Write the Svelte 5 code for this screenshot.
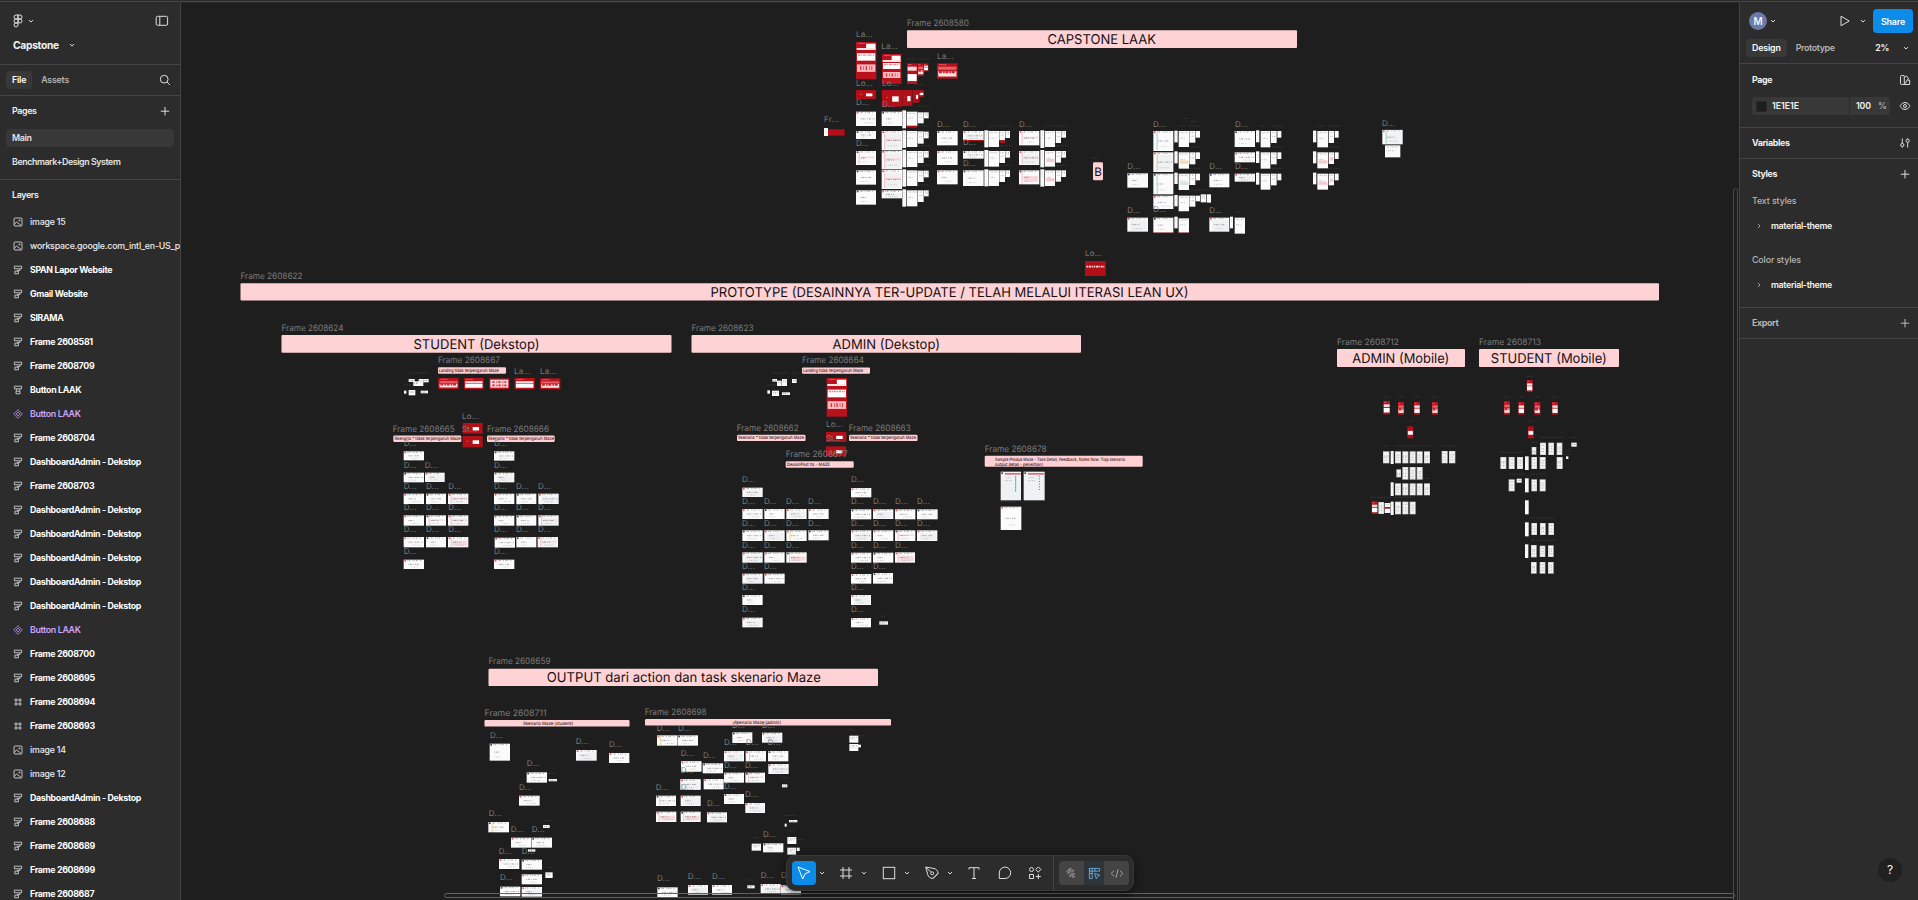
<script>
  const layers = [
    ['image', 'image 15'], ['image', 'workspace.google.com_intl_en-US_products'],
    ['auto', 'SPAN Lapor Website'], ['auto', 'Gmail Website'], ['auto', 'SIRAMA'],
    ['auto', 'Frame 2608581'], ['auto', 'Frame 2608709'], ['center', 'Button LAAK'],
    ['component', 'Button LAAK'], ['auto', 'Frame 2608704'], ['auto', 'DashboardAdmin - Dekstop'],
    ['auto', 'Frame 2608703'], ['auto', 'DashboardAdmin - Dekstop'], ['auto', 'DashboardAdmin - Dekstop'],
    ['auto', 'DashboardAdmin - Dekstop'], ['auto', 'DashboardAdmin - Dekstop'], ['auto', 'DashboardAdmin - Dekstop'],
    ['component', 'Button LAAK'], ['auto', 'Frame 2608700'], ['auto', 'Frame 2608695'],
    ['frame', 'Frame 2608694'], ['frame', 'Frame 2608693'], ['image', 'image 14'], ['image', 'image 12'],
    ['auto', 'DashboardAdmin - Dekstop'], ['auto', 'Frame 2608688'], ['auto', 'Frame 2608689'],
    ['auto', 'Frame 2608699'], ['auto', 'Frame 2608687']
  ];

  // Section banners: x, y, width, height, text, text x, text width
  const banners = [
    [907, 30.3, 390, 17.6, 'CAPSTONE LAAK', 1047.5, 108.5],
    [240.5, 283.3, 1418.5, 17.2, 'PROTOTYPE (DESAINNYA TER-UPDATE / TELAH MELALUI ITERASI LEAN UX)', 710.5, 478],
    [281.5, 335, 390, 17.8, 'STUDENT (Dekstop)', 413.5, 126],
    [691.5, 335, 389.5, 17.8, 'ADMIN (Dekstop)', 832.5, 107.5],
    [1337, 349, 128, 18, 'ADMIN (Mobile)', 1352.3, 97],
    [1479, 349, 140, 18, 'STUDENT (Mobile)', 1490.8, 116],
    [488.5, 668.8, 389.5, 17.2, 'OUTPUT dari action dan task skenario Maze', 546.8, 274]
  ];

  // Frame names: x, baseline, text
  const names = [
    [907, 25.8, 'Frame 2608580'], [240.5, 279, 'Frame 2608622'], [281.5, 331, 'Frame 2608624'],
    [691.5, 331, 'Frame 2608623'], [1337, 344.8, 'Frame 2608712'], [1479, 344.8, 'Frame 2608713'],
    [488.5, 664, 'Frame 2608659'], [484.5, 716, 'Frame 2608711'], [644.7, 715, 'Frame 2608698'],
    [438, 363, 'Frame 2608667'], [392.7, 432, 'Frame 2608665'], [487, 432, 'Frame 2608666'],
    [802, 363, 'Frame 2608664'], [736.7, 431, 'Frame 2608662'], [848.7, 431, 'Frame 2608663'],
    [785.7, 457, 'Frame 2608677'], [984.7, 452, 'Frame 2608678']
  ];

  // Small note strips: x, y, width, height, text, text x, text width
  const strips = [
    [438, 367.2, 68, 6.6, 'Landing tidak terpengaruh Maze', 438.8, 60],
    [393.3, 435.5, 68, 6.4, 'Skenario * tidak terpengaruh Maze', 394.5, 66],
    [487, 435.5, 67.7, 6.4, 'Skenario * tidak terpengaruh Maze', 488, 66],
    [802, 367.4, 68, 6.4, 'Landing tidak terpengaruh Maze', 803, 60],
    [737, 434.7, 68.5, 6.4, 'Skenario * tidak terpengaruh Maze', 738, 66],
    [849, 434.7, 68.5, 6.4, 'Skenario * tidak terpengaruh Maze', 850, 66],
    [785.7, 461.3, 68, 6.4, 'DesainPost Its - MAZE', 787, 43],
    [484.5, 720, 145, 6.6, 'Skenario Maze (student)', 523, 50],
    [645, 719, 246, 6.6, 'Skenario Maze (admin)', 734, 47]
  ];

  // Clusters use a 1/3 px grid: kind x y w h. Kinds: w screen, p screen with pink rows,
  // m mobile, s side strip, r red, h red header page, g pale shot, d dotted label
  const clusters = [
    { x: 810, y: 0, items: `h 138 126 61 112;h 216 162 58 90;h 291 190 31 62;h 323 190 18 38;h 341 190 14 24;h 381 190 62 46;
      r 138 270 60 27;r 216 270 61 50;r 277 270 30 48;r 308 270 20 38;r 328 270 13 22;
      w 138 335 60 43;w 215 335 61 43;s 277 331 11 54;w 290 335 32 43;r 290 377 32 6;w 323 337 18 33;w 342 337 14 18;
      w 138 393 60 24;p 215 393 61 57;s 277 391 11 53;w 290 393 32 48;w 323 394 18 37;w 342 395 14 20;
      p 138 453 60 42;p 215 452 61 56;s 277 449 11 53;w 290 453 32 48;w 323 453 18 36;w 342 453 14 20;
      w 138 511 60 43;p 215 510 61 57;s 277 508 11 52;w 290 511 32 47;w 323 512 18 34;w 342 512 14 20;
      w 138 571 60 43;w 215 571 61 24;s 277 568 11 52;w 290 571 32 48;w 323 571 18 35;w 342 571 14 18;
      w 381 393 62 43;w 459 393 62 29;r 459 420 62 3;s 523 391 12 51;w 536 393 31 48;w 568 393 17 28;r 570 421 16 8;w 586 393 14 21;
      w 381 453 62 42;w 459 453 62 23;s 523 450 12 50;w 536 453 31 47;w 568 453 17 36;w 586 453 14 20;
      w 381 511 62 42;w 459 511 62 47;s 523 508 12 51;w 536 511 31 47;w 568 511 17 35;w 586 511 14 20;
      p 627 393 61 43;s 691 391 12 53;w 705 393 30 48;w 737 393 16 36;w 754 393 14 20;
      p 627 453 61 42;s 691 450 12 52;p 705 453 30 47;w 737 453 16 35;w 754 453 14 20;
      q 627 511 61 42;s 691 508 12 52;q 705 511 30 47;w 737 511 16 34;w 754 511 14 20;
      s 42 384 12 24;r 54 388 50 19;B 849 487 30 54;r 825 783 62 45;
      d 291 177 22;d 325 177 36;d 316 255 30;d 323 318 38;d 323 378 38;d 323 437 38;d 323 496 38;d 323 555 34;
      d 538 378 22;d 567 378 40;d 567 437 38;d 567 496 36;d 705 378 24;d 735 378 40;d 735 437 38;d 735 496 36;d 847 474 18`,
      tags: 'La 138 112;La 214 148;La 381 178;Lo 138 257;Lo 216 257;D 138 316;D 216 320;Fr 42 366;D 381 380;D 459 380;D 627 380;D 138 438;D 459 436;D 459 497;Lo 825 769' },
    { x: 1090, y: 90, items: `w 112 250 62 43;w 112 383 62 42;
      t 190 123 60 60;s 253 122 10 35;w 266 123 31 48;w 298 123 18 35;w 317 123 13 20;
      y 190 187 60 59;s 253 184 10 36;y 266 187 31 49;w 298 187 18 36;w 317 187 13 20;
      t 190 251 60 62;s 253 248 10 34;t 266 251 31 49;w 298 251 18 34;w 317 251 13 20;
      w 190 317 60 40;s 253 315 10 34;w 266 317 31 47;w 298 317 18 33;w 317 317 13 17;w 332 313 17 24;w 351 313 12 25;
      w 190 383 60 45;s 253 380 10 35;w 266 385 31 43;r 190 428 60 1.5;r 266 428 31 1.5;r 266 364 31 1.5;
      w 434 123 61 48;s 498 121 10 36;w 512 123 29 49;w 543 123 17 36;w 562 123 12 20;
      w 434 187 61 30;s 498 184 10 35;w 512 187 29 49;w 543 187 17 36;w 562 187 12 20;
      w 434 251 61 24;s 498 248 10 36;w 512 251 29 48;w 543 251 17 35;w 562 251 12 20;
      w 358 251 60 41;w 358 383 60 42;s 420 380 9 35;w 434 383 31 48;
      s 669 122 10 35;w 682 123 32 49;w 716 123 16 36;w 734 123 12 20;
      s 669 184 10 36;p 682 187 32 48;p 716 187 16 35;w 734 187 12 20;
      s 669 248 10 35;p 682 251 32 48;p 716 251 16 35;w 734 251 12 20;
      t 877 120 61 43;w 885 166 46 36;r 877 118 61 2;
      d 268 108 18;d 297 108 40;d 303 94 20;d 278 85 20;d 297 171 40;d 297 235 36;d 297 300 72;d 510 108 20;d 541 108 40;d 541 171 38;d 541 235 38;d 680 108 22;d 714 108 36;d 714 171 36;d 714 235 36;d 436 365 14`,
      tags: 'D 189 110;D 112 236;D 435 110;D 358 236;D 435 236;D 112 368;D 190 367;D 358 368;D 876 107' },
    { x: 380, y: 340, items: `w 86 117 18 9;w 100 124 18 14;w 116 117 14 21;w 130 117 16 10;w 72 152 7 9;w 86 150 20 16;w 122 152 22 8;
      h 175 114 61 33;h 252 114 59 34;g 328 115 60 32;h 404 114 60 34;h 480 115 61 33;
      r 248 249 60 32;r 248 288 60 34;
      w 71 334 61 27;w 71 398 61 29;w 135 398 59 28;w 71 461 61 31;w 138 461 60 31;p 204 461 61 31;
      w 71 526 61 31;p 138 526 60 31;p 204 526 61 31;w 71 591 61 31;w 138 591 60 31;q 204 591 61 31;w 71 659 61 28;
      w 342 334 61 28;w 342 398 61 29;w 342 461 61 31;w 409 461 60 31;w 475 461 61 31;
      w 342 527 61 30;w 409 526 60 31;p 475 526 61 31;w 344 593 61 30;w 409 591 60 31;p 473 591 61 31;w 342 659 61 28;
      d 88 99 60;d 72 135 30`,
      tags: 'La 402 101;La 480 101;Lo 246 236;St 246 277;D 71 318;D 71 383;D 134 383;D 71 446;D 138 446;D 205 446;D 71 511;D 138 511;D 205 511;D 71 577;D 138 577;D 205 577;D 71 641;D 342 318;D 342 383;D 342 446;D 408 446;D 474 446;D 342 511;D 408 511;D 474 511;D 342 577;D 408 577;D 474 577;D 342 641' },
    { x: 720, y: 340, items: `w 157 117 14 8;w 171 122 14 16;w 186 117 15 21;w 216 117 14 12;w 142 151 8 10;w 156 152 21 16;w 186 157 24 8;
      h 320 114 61 116;r 318 276 61 30;r 318 319 60 30;
      w 67 443 61 28;w 67 507 61 30;w 133 507 61 30;w 199 507 61 30;w 265 507 61 30;
      w 67 571 61 32;w 133 571 61 32;y 199 571 61 32;w 265 571 61 30;w 67 637 61 31;w 133 637 61 31;q 199 637 61 31;
      w 67 701 61 30;w 133 701 61 30;w 67 765 61 30;w 67 833 61 29;
      w 393 444 61 28;w 393 508 61 30;w 459 508 61 29;w 525 508 61 30;w 591 508 62 30;
      w 393 571 61 32;w 459 571 61 32;p 525 571 61 32;w 591 571 61 32;w 393 638 61 30;w 459 638 61 30;q 525 637 60 31;
      w 393 702 61 29;w 459 699 60 32;w 393 765 60 30;w 393 834 60 28;w 478 844 26 10;
      d 156 99 48;d 216 99 18;d 140 135 28;d 482 829 14`,
      tags: 'Lo 318 260;Si 318 302;D 66 427;D 66 491;D 132 491;D 198 491;D 264 491;D 66 558;D 132 558;D 198 558;D 264 558;D 66 623;D 132 623;D 198 623;D 66 686;D 132 686;D 66 749;D 66 817;D 393 427;D 393 491;D 459 491;D 525 491;D 591 491;D 393 558;D 459 558;D 525 558;D 591 558;D 393 623;D 459 623;D 525 623;D 393 686;D 459 686;D 393 749;D 393 817' },
    { x: 960, y: 320, items: `c 122 455 61 86;c 191 455 63 86;w 122 560 62 70;d 120 545 46`, tags: '' },
    { x: 1320, y: 320, items: `k 190 243 20 40;k 234 246 18 38;k 282 246 18 38;k 336 246 18 38;r 262 319 18 36;
      m 189 394 19 36;s 212 393 9 39;m 225 394 18 36;m 247 394 18 36;m 269 394 18 36;m 290 394 18 36;m 312 394 18 36;m 365 393 18 37;m 387 393 19 37;
      m 229 448 14 24;m 247 441 18 38;m 269 441 18 38;m 290 441 18 38;
      s 212 487 9 41;m 225 490 18 36;m 247 490 18 36;m 269 490 18 36;m 290 490 18 36;m 312 490 18 36;
      k 155 544 18 38;m 175 546 17 36;w 194 549 17 30;r 194 561 17 5;s 212 545 9 40;m 225 545 18 38;m 247 545 18 38;m 269 545 18 38;
      k 620 180 18 36;k 552 244 18 40;k 595 246 18 38;k 643 246 18 38;k 696 246 18 38;r 624 319 17 36;
      m 635 381 14 23;m 660 368 18 37;m 685 368 17 37;m 710 368 17 37;w 754 368 16 12;w 738 409 7 8;
      m 541 411 18 36;m 566 411 18 36;m 591 411 18 36;s 615 409 11 41;m 634 411 17 36;m 659 411 18 36;m 710 411 18 36;
      m 566 478 18 36;w 590 476 15 12;s 615 475 11 42;m 634 478 17 36;m 659 478 18 36;s 615 541 11 42;
      s 615 607 11 42;m 634 609 17 36;m 660 609 17 36;m 685 609 17 36;s 615 673 10 41;m 633 675 17 37;m 659 677 17 34;m 684 676 17 35;
      m 633 726 17 35;m 659 726 17 35;m 684 726 17 35;
      d 192 231 20;d 234 231 18;d 282 231 18;d 336 231 18;d 262 303 18;d 188 378 20;d 226 378 106;d 366 378 42;d 270 475 60;d 152 532 62;d 226 532 60;
      d 620 169 20;d 552 231 20;d 595 231 18;d 643 231 18;d 696 231 18;d 624 303 18;d 660 352 68;d 752 352 20;d 633 367 20;d 541 397 72;d 735 393 20;d 735 403 20;d 567 462 42;d 633 462 46;d 633 594 72;d 633 661 76`, tags: '' },
    { x: 470, y: 650, items: `w 59 281 61 51;w 318 300 62 32;w 417 309 61 30;w 170 367 61 31;w 236 387 25 7;w 147 437 62 30;
      y 55 516 62 31;w 219 525 20 9;w 123 563 61 30;w 185 563 61 30;w 174 598 22 7;w 87 627 61 30;w 155 629 61 30;w 226 667 22 17;w 155 673 61 30;w 90 710 61 29;w 155 711 61 29;
      y 561 256 61 31;w 623 256 61 31;w 633 334 61 31;w 631 388 61 31;
      d 232 371 24;d 222 512 24;d 230 652 16`,
      tags: 'D 60 265;D 317 283;D 417 291;D 170 349;D 147 421;D 56 499;D 122 547;D 185 547;D 86 611;D 155 611;D 90 691' },
    { x: 635, y: 700, items: `w 292 97 60 32;w 381 98 61 30;w 138 184 61 30;w 203 190 61 30;
      w 267 153 60 31;y 332 153 61 31;w 399 153 61 31;w 400 192 61 30;w 267 218 60 30;p 331 218 59 30;
      w 137 238 59 31;w 206 237 60 31;w 267 282 60 30;w 331 309 59 30;w 441 253 16 9;
      y 63 287 60 31;w 137 287 60 31;q 63 335 61 31;q 137 335 60 31;w 216 337 60 30;
      w 462 360 25 7;w 449 371 6 9;w 457 411 27 21;w 350 431 28 21;w 384 430 61 27;w 457 443 26 21;w 485 443 9 10;
      w 67 562 61 30;w 159 555 60 29;w 231 555 60 29;w 337 556 22 9;w 377 552 60 30;w 438 556 60 27;
      w 643 107 27 21;w 643 132 27 21;w 669 134 9 8;
      d 441 233 20;d 449 346 36;d 460 393 18;d 352 413 18;d 484 419 22;d 338 540 20;d 643 90 20;d 668 107 24`,
      tags: 'D 65 92;D 129 92;D 291 85;D 381 85;D 137 167;D 137 220;D 204 175;D 267 136;D 332 136;D 398 136;D 267 203;D 330 203;D 267 266;D 330 292;D 62 271;D 137 270;D 216 318;D 384 412;D 66 544;D 158 538;D 231 538;D 377 535;D 438 535' }
  ].map((c) => ({
    x: c.x, y: c.y,
    items: c.items.split(';').map((s) => { const [k, ...n] = s.trim().split(' '); return [k, ...n.map(Number)]; }),
    tags: c.tags ? c.tags.split(';').map((s) => { const [t, x, y] = s.split(' '); return [t + '...', +x, +y]; }) : []
  }));
</script>

{#snippet chevron()}
  <svg class="chev" width="8" height="8" viewBox="0 0 8 8"><path d="M2 3.1 4 5l2-1.9" /></svg>
{/snippet}
{#snippet plus()}
  <svg width="12" height="12" viewBox="0 0 12 12"><path d="M6 2v8.4M1.8 6.2h8.4" /></svg>
{/snippet}

{#snippet item(k, x, y, w, h, i)}
  {#if k === 'd'}
    <path d="M{x} {y}h{w}" class="dots" />
  {:else if k === 'B'}
    <rect {x} {y} width={w} height={h} rx="4" fill="#ffd3d6" />
    <text x={x + 4} y={y + 40} class="letter">B</text>
  {:else if k === 'r'}
    <rect {x} {y} width={w} height={h} fill="#b20f18" />
    {#if h > 20 && y < 700 && x !== 54}
      <rect x={x + w * (w < 20 ? 0.08 : 0.5)} y={y + h * 0.38} width={w * (w < 20 ? 0.84 : 0.32)} height={h * 0.32} fill="#fff" />
      <rect x={x + w * 0.2} y={y + h * 0.42} width={w * 0.08} height="3" fill="#ec4d55" />
    {:else if y > 700}
      <path d="M{x + 4} {y + 17}h{w - 8}" stroke="#ffd9db" stroke-width="5" stroke-dasharray="5 2 8 2 3 2" />
    {/if}
  {:else if k === 'h' || k === 'k'}
    <rect {x} {y} width={w} height={h} fill="#b8131d" />
    {#if h > 80}
      <rect x={x + w * 0.5} y={y + 5} width={w * 0.46} height="13" fill="#fff" />
      <rect x={x + 2} y={y + 18} width={w - 4} height="6" fill="#ffe3e4" />
      <rect x={x + 3} y={y + h * 0.3} width={w - 6} height={h * 0.2} fill="#fff" />
      <path d="M{x + 6} {y + h * 0.35}h{w - 12}" stroke="#e58d93" stroke-width="4" stroke-dasharray="8 2 3 2" />
      <rect x={x + 3} y={y + h * 0.6} width={w - 6} height={h * 0.2} fill="#ffb9be" />
      <path d="M{x + w * 0.2} {y + h * 0.7}h{w * 0.6}" stroke="#c8323c" stroke-width={h * 0.1} stroke-dasharray="4 6 2 5" />
    {:else}
      <rect x={x + w * 0.06} y={y + Math.min(h * 0.28, 10)} width={w * 0.88} height={Math.min(h * 0.2, 12)} fill={i % 2 ? '#ee6d75' : '#fff'} opacity=".85" />
      <rect x={x + w * 0.06} y={y + h * 0.52} width={w * 0.88} height={h * 0.34} fill={i % 2 ? '#ffe0e1' : '#fff'} />
      {#if i % 2}<path d="M{x + w * 0.1} {y + h * 0.56}h{w * 0.8}" stroke="#c52933" stroke-width="8" stroke-dasharray="9 3 5 2" />{/if}
    {/if}
    <path d="M{x + w * 0.1} {y + 4}h{w * 0.35}" stroke="#ed4d56" stroke-width="3" />
  {:else if k === 'g'}
    <rect {x} {y} width={w} height={h} fill="#b8131d" />
    <rect x={x + 3} y={y + 4} width={w - 6} height={h - 8} fill="#ffd3d6" />
    <path d="M{x + 9} {y + 11}h{w - 18}M{x + 9} {y + 21}h{w - 18}" stroke="#c52933" stroke-width="5" stroke-dasharray="7 5 3 3" />
  {:else if k === 'c'}
    <rect {x} {y} width={w} height={h} fill="#eef2f4" />
    <rect x={x + 13} y={y + 4} width={w - 14} height="5" fill="#df6b77" />
    <rect x={x + 2} y={y + 2} width="5" height="5" fill="#444" />
    <path d="M{x + 13} {y + 27}h22M{x + 17} {y + 18}h14" stroke="#8b979d" stroke-width="2" stroke-dasharray="3 3" />
    <path d="M{x + w - 16} {y + 12}v48" stroke={i ? '#59636b' : '#4db87a'} stroke-width="3" stroke-dasharray={i ? '3 5' : '9 1'} />
  {:else}
    <rect {x} {y} width={w} height={h} fill={k === 'm' ? '#cfcfcf' : '#fbfbfb'} />
    {#if k === 'm'}
      <rect x={x + 2} y={y + 2} width={w - 4} height={h - 4} fill="#f4f4f4" />
      <path d="M{x + 3} {y + 8 + (i % 3) * 3}h{w - 6}M{x + 3} {y + h * 0.5}h{w - 8}M{x + 3} {y + h * 0.72}h{w - 7}" stroke="#555" stroke-width="2" stroke-dasharray="2 3 4 2" opacity=".6" />
    {:else if k === 's'}
      <path d="M{x + w / 2} {y + 8}v{h * 0.3}" stroke="#999" stroke-width="1.5" stroke-dasharray="2 4" />
    {:else if w > 50}
      {#if i % 3 === 1}<rect x={x + 8} y={y + 8} width={w - 11} height={h - 10} fill="#f0f1f3" />{/if}
      {#if k === 'q' || k === 'p'}
        <rect x={x + 14} y={y + h * 0.4} width={w - 18} height={h * (k === 'q' ? 0.42 : 0.12)} fill="#f8d6d9" />
        <rect x={x + 8} y={y + 2} width="2.5" height={h - 4} fill="#f0b4ba" />
      {:else if k === 't' || k === 'y'}
        <rect x={x + 10} y={y + 5} width="2.5" height={h - 7} fill={k === 't' ? '#8fd0bd' : '#ebc774'} />
      {/if}
      <rect x={x + 2} y={y + 1} width="5" height="5" fill={i % 3 ? '#dd5961' : '#444'} />
      <path d="M{x + 11} {y + 3}h{w - 20}" stroke="#666" stroke-width="1.7" stroke-dasharray="2 2 5 7 3 3" />
      <path d="M{x + 14} {y + h * 0.5}h{16 + (i % 4) * 9}" stroke="#4d4d55" stroke-width="2" stroke-dasharray="3 2 6 3 2 4" opacity=".75" />
      <path d="M{x + 14 + (i % 3) * 5} {y + h * 0.78}h{20 + (i % 2) * 10}" stroke="#74747c" stroke-width="1.5" stroke-dasharray="2 4 4 2" opacity=".7" />
    {:else if w > 13}
      <path d="M{x + 3} {y + 5}h{w - 6}M{x + 4} {y + h * 0.45}h{w * 0.5}" stroke="#555" stroke-width="1.6" stroke-dasharray="2 3 4 3" opacity=".75" />
      {#if k !== 'w'}<rect x={x + 4} y={y + h * 0.5} width={w - 6} height={h * 0.2} fill={k === 'y' ? '#f2dfaf' : k === 't' ? '#d3e9e3' : '#f7c8cd'} />{/if}
    {/if}
  {/if}
{/snippet}

<div class="app">
  <div class="topline"></div>
  <aside class="left">
    <header>
      <div class="row brand">
        <svg width="10" height="14" viewBox="0 0 10 14"><path d="M5 1H3a2 2 0 0 0 0 4h2zM5 1h2a2 2 0 0 1 0 4H5zM5 5H3a2 2 0 0 0 0 4h2zM3 9a2 2 0 1 0 2 2V9zM7 5a2 2 0 1 1 0 4 2 2 0 0 1 0-4z" /></svg>
        {@render chevron()}
        <svg class="end" width="14" height="12" viewBox="0 0 14 12"><rect x="1.2" y="1.3" width="11.4" height="9" rx="1.3" /><path d="M4.8 1.5v8.8" /></svg>
      </div>
      <div class="row title"><b>Capstone</b>{@render chevron()}</div>
    </header>
    <div class="row tabs">
      <span class="tab on">File</span><span class="tab">Assets</span>
      <svg class="end" width="12" height="12" viewBox="0 0 12 12"><circle cx="5.2" cy="5.2" r="3.9" /><path d="m8.1 8.1 2.8 2.8" /></svg>
    </div>
    <div class="pages">
      <div class="row head"><span>Pages</span><span class="end ic">{@render plus()}</span></div>
      <div class="page on">Main</div>
      <div class="page second">Benchmark+Design System</div>
    </div>
    <div class="layers">
      <div class="lh">Layers</div>
      {#each layers as [type, name]}
        <div class="layer" class:purple={type === 'component'} class:soft={type === 'image'}>
          <svg width="10" height="10" viewBox="0 0 10 10">
            {#if type === 'image'}<rect x="1" y="1" width="8" height="8" rx="1" /><circle cx="6.5" cy="3.5" r=".6" /><path d="m1.5 7.5 2-2.6 4.8 3.8" />
            {:else if type === 'auto'}<path d="M1.4 1.2h7.2v2.6H1.4zM1.8 6.2h3.6v2.6H1.8zM6.8 3.9v1.6H4" />
            {:else if type === 'center'}<path d="M1.4 1.2h7.2v2.6H1.4zM3 6.2h4v2.6H3zM3.3 3.9v2.1M6.7 3.9v2.1" />
            {:else if type === 'frame'}<path d="M3 1.2v7.6M7 1.2v7.6M1.2 3h7.6M1.2 7h7.6" />
            {:else}<path d="M5 .7 9.3 5 5 9.3.7 5zM5 3 7 5 5 7 3 5z" />{/if}
          </svg>
          <span>{name}</span>
        </div>
      {/each}
    </div>
  </aside>

  <main>
    <svg class="canvas" width="1558" height="898" viewBox="181 2 1558 898">
      {#each banners as [x, y, w, h, text, tx, tw]}
        <rect {x} {y} width={w} height={h} rx="1" fill="#ffd3d6" />
        <text class="banner" x={tx} y={y + h / 2 + 4.9} textLength={tw} lengthAdjust="spacingAndGlyphs">{text}</text>
      {/each}
      {#each strips as [x, y, w, h, text, tx, tw]}
        <rect {x} {y} width={w} height={h} rx="1.2" fill="#ffd0d4" />
        <text class="note" x={tx} y={y + h / 2 + 1.5} textLength={tw} lengthAdjust="spacingAndGlyphs">{text}</text>
      {/each}
      <rect x="984.7" y="455.7" width="158" height="11" rx="1.2" fill="#ffd0d4" />
      <text class="note" x="995" y="460.7" textLength="130" lengthAdjust="spacingAndGlyphs">Sample Produk Maze - Task Detail, Feedback, Notes Now. Tiap skenario</text>
      <text class="note" x="995" y="465.7" textLength="48" lengthAdjust="spacingAndGlyphs">output detail - penelitian)</text>
      {#each clusters as c}
        <g transform="translate({c.x} {c.y}) scale(.33333)">
          {#each c.items as [k, x, y, w, h], i}{@render item(k, x, y, w, h, i)}{/each}
          {#each c.tags as [t, x, y]}<text class="tag" {x} {y}>{t}</text>{/each}
        </g>
      {/each}
      {#each names as [x, y, text]}<text class="name" {x} {y} textLength="62" lengthAdjust="spacingAndGlyphs">{text}</text>{/each}
    </svg>
    <div class="vbar"></div>
    <div class="hbar"></div>
    <div class="toolbar">
      <span class="tool sel"><svg width="16" height="16" viewBox="0 0 16 16"><path d="m2 2 12 4.6-5 2.2L6.7 14z" /></svg></span>{@render chevron()}
      <span class="tool f"><svg width="14" height="14" viewBox="0 0 14 14"><path d="M4 1v12M10 1v12M1 4h12M1 10h12" /></svg></span>{@render chevron()}
      <span class="tool"><svg width="14" height="14" viewBox="0 0 14 14"><rect x="1.3" y="1.3" width="11.4" height="11.4" /></svg></span>{@render chevron()}
      <span class="tool"><svg width="16" height="16" viewBox="0 0 16 16"><path d="m1.7 2 2 7.4c.6 2.7 2.4 3.7 5.2 4.1l5.3-5.2C13.6 5.6 12.4 4 10 3.5zM2 2.3l5 5" /><circle cx="8.2" cy="8.3" r="1.5" /><path d="m9 13.5 5-5.1" /></svg></span>{@render chevron()}
      <span class="tool t"><svg width="14" height="14" viewBox="0 0 14 14"><path d="M2 3.5V1.7h10v1.8M7 1.7v10.8M5 12.5h4" /></svg></span>
      <span class="tool o"><svg width="14" height="14" viewBox="0 0 14 14"><path d="M1.3 12.5V7a5.7 5.7 0 1 1 5.7 5.5z" /></svg></span>
      <span class="tool o"><svg width="14" height="14" viewBox="0 0 14 14"><circle cx="3.5" cy="3.5" r="2" /><path d="m10.3.9 2.6 2.6-2.6 2.6-2.6-2.6zM1.5 8.5h4v4h-4zM10.3 8v5M7.8 10.5h5" /></svg></span>
      <i class="sep"></i>
      <div class="modes">
        <span><svg width="13" height="13" viewBox="0 0 14 14"><path d="M1.5 5 6 1.5C8 .5 3 6 3 7s5-4.5 6-3.6S4 9.4 5 10s4.3-3.6 5-3-2.7 3.4-2.3 4 1.5 0 3.3-1.2" /></svg></span>
        <span class="on"><svg width="13" height="13" viewBox="0 0 14 14"><path d="M1.5 1.5h11v3h-11zM1.5 1.5v11h3v-11M7.5 1.5v3M1.5 7h3M7 7l5.8 1.8-2.6 1.3L9 12.7z" /></svg></span>
        <span><svg width="14" height="13" viewBox="0 0 15 14"><path d="M4.3 4 1.2 7l3.1 3M10.7 4l3.1 3-3.1 3M8.7 2.5l-2.4 9" /></svg></span>
      </div>
    </div>
  </main>

  <aside class="right">
    <div class="row user"><span class="avatar">M</span>{@render chevron()}
      <svg class="end" width="12" height="14" viewBox="0 0 12 14"><path d="M2 2.2v9.6L10.2 7z" /></svg>
      <span class="pc">{@render chevron()}</span><button>Share</button></div>
    <div class="row modebar"><span class="tab on">Design</span><span class="tab">Prototype</span><span class="zoom">2%</span>{@render chevron()}</div>
    <div class="section page-sec">
      <div class="row h"><b>Page</b><svg width="12" height="12" viewBox="0 0 12 12"><rect x="1.5" y="1.5" width="3.8" height="9" rx="1" /><path d="m5.3 3.5 1.5-1.7 2.8 2.3-4 6M8.5 6.2h2.2v4.3H5.2" /></svg></div>
      <div class="row color"><div class="field"><i class="swatch"></i><span>1E1E1E</span><em>100</em><u>%</u></div>
        <svg width="12" height="12" viewBox="0 0 12 12"><path d="M1 6s1.8-3.500 5-3.500S11 6 11 6 9.200 9.500 6 9.500 1 6 1 6z" /><circle cx="6" cy="6" r="1.500" /></svg></div>
    </div>
    <div class="section row h one"><b>Variables</b><svg width="12" height="12" viewBox="0 0 12 12"><path d="M3.300 1.500v4.800M3.300 9.600v1M8.700 5.300v5.200M8.700 1.400v.8" /><circle cx="3.300" cy="8" r="1.600" /><circle cx="8.700" cy="3.700" r="1.600" /></svg></div>
    <div class="section styles">
      <div class="row h"><b>Styles</b>{@render plus()}</div>
      {#each ['Text styles', 'Color styles'] as label}
        <div class="label">{label}</div>
        <div class="row theme"><svg width="8" height="8" viewBox="0 0 8 8"><path d="m3 2 2 2-2 2" /></svg><span>material-theme</span></div>
      {/each}
    </div>
    <div class="section row h one dim"><b>Export</b>{@render plus()}</div>
    <div class="help">?</div>
  </aside>
</div>

<style>
  :global(body) { background: #1e1e1e; overflow: hidden; }
  .app { width: 1918px; height: 900px; display: grid; grid-template: 3px 897px / 181px 1558px 179px; background: #1e1e1e; font: 600 8.8px/12px Inter, sans-serif; letter-spacing: -.32px; color: #f2f2f2; overflow: hidden; }
  .topline { grid-column: 1 / 4; box-sizing: border-box; border-top: 1px solid #2a2a2a; background: #494949; border-bottom: 1px solid #292929; }
  svg { fill: none; stroke: #dedede; stroke-width: 1; flex: none; display: block; }
  .row { display: flex; align-items: center; }
  .end { margin-left: auto; }
  b { font-weight: 650; }
  .left { box-sizing: border-box; border-right: 1px solid #444; background: #2c2c2c; overflow: hidden; }
  header { box-sizing: border-box; height: 62px; border-bottom: 1px solid #444; padding: 9px 11px 0 13px; }
  .brand { height: 18px; gap: 3px; }
  .brand .chev { margin-left: 1px; }
  .title { height: 30px; font-size: 10.300px; gap: 9px; }
  .tabs { box-sizing: border-box; height: 31px; border-bottom: 1px solid #444; padding: 0 9px 0 6px; gap: 3px; }
  .tab { height: 18px; line-height: 18px; padding: 0 6px; border-radius: 4px; color: #b5b5b5; }
  .tabs .tab { letter-spacing: -.2px; }
  .tab.on { background: #383838; color: #fff; }
  .pages { box-sizing: border-box; height: 84px; border-bottom: 1px solid #444; padding: 6px 6px 0; }
  .head { height: 18px; padding: 0 3px 0 6px; }
  .page { height: 18px; line-height: 18px; padding: 0 6px; border-radius: 4px; margin-top: 6px; color: #e4e4e4; }
  .page.on { margin-top: 9px; background: #383838; }
  .second { font-weight: 570; letter-spacing: -.4px; }
  .layers { padding-top: 5px; }
  .lh { height: 25px; line-height: 20px; padding-left: 12px; box-sizing: border-box; }
  .layer { height: 24px; display: flex; align-items: center; padding-left: 13px; gap: 7px; white-space: nowrap; font-weight: 650; color: #fff; }
  .layer svg { stroke: #d0d0d0; stroke-width: .9; }
  .soft { font-weight: 500; color: #ececec; letter-spacing: -.2px; }
  .purple { color: #c9a6ff; font-weight: 600; }
  .purple svg { stroke: #a98fd8; }
  main { position: relative; }
  .canvas { position: absolute; left: 0; top: -1px; stroke: none; letter-spacing: 0; }
  .canvas text { font-family: Inter, sans-serif; stroke: none; text-rendering: geometricPrecision; }
  .banner { font-size: 13.500px; font-weight: 400; fill: #161012; }
  .note { font-size: 4.400px; font-weight: 500; fill: #40262a; }
  .name { font-size: 8.800px; font-weight: 400; fill: #7c7c7c; }
  .tag { font-size: 24px; font-weight: 400; fill: #7c7c7c; letter-spacing: .5px; }
  .letter { font-size: 35px; font-weight: 400; fill: #171012; }
  .dots { stroke: #777; stroke-width: 2; stroke-dasharray: 2 3; opacity: .7; }
  .vbar { position: absolute; right: 1px; top: 185px; width: 5px; height: 720px; box-sizing: border-box; border: 1px solid #4b4b4b; border-radius: 3px; }
  .hbar { position: absolute; left: 263px; top: 890px; width: 1291px; height: 5px; box-sizing: border-box; border: 1px solid #626262; border-radius: 3px; }
  .toolbar { position: absolute; left: 605px; top: 852px; width: 348px; height: 36px; box-sizing: border-box; border: 1px solid #383838; border-radius: 9px; background: #2c2c2c; display: flex; align-items: center; padding-left: 5px; box-shadow: 0 2px 8px #0008; }
  .tool { width: 24px; height: 24px; display: grid; place-items: center; flex: none; }
  .sel { background: #0c8ce9; border-radius: 4px; }
  .sel svg { stroke: #fff; }
  .toolbar > .chev { margin: 0 9px 0 2px; }
  .f { margin-left: -1px; }
  .t { margin-left: -1px; }
  .o { margin-left: 6.500px; }
  .sep { width: 1px; height: 34px; margin-left: 6px; background: #444; }
  .modes { display: flex; margin-left: 5px; height: 24px; width: 70px; border-radius: 4px; overflow: hidden; background: #444; }
  .modes span { display: grid; place-items: center; flex: 1; }
  .modes span.on { background: #2f3439; flex: 0 0 20px; }
  .modes svg { stroke: #aaa; }
  .modes .on svg { stroke: #65ace2; }
  .right { box-sizing: border-box; border-left: 1px solid #444; background: #2c2c2c; position: relative; }
  .user { height: 36px; padding: 0 5px 0 9px; }
  .avatar { width: 18px; height: 18px; border-radius: 50%; background: #6b7aa6; text-align: center; line-height: 18px; font-size: 10px; }
  .user > .chev { margin-left: 2px; }
  .pc { margin: 0 6px 0 8px; }
  button { width: 40px; height: 24px; border: 0; border-radius: 4px; padding: 0; background: #0c8ce9; color: #fff; font: 600 8.800px Inter, sans-serif; letter-spacing: -.1px; }
  .modebar { box-sizing: border-box; height: 25px; padding: 0 8px 6px 6px; border-bottom: 1px solid #444; gap: 3px; }
  .modebar .on { letter-spacing: -.15px; }
  .zoom { margin-left: auto; margin-right: 10px; }
  .section { box-sizing: border-box; border-bottom: 1px solid #444; }
  .h { justify-content: space-between; padding: 0 7px 0 12px; height: 31px; }
  .page-sec { height: 64px; }
  .color { height: 22px; justify-content: space-between; padding: 0 7px 0 12px; }
  .field { width: 138px; height: 18px; border-radius: 4px; background: #383838; display: flex; align-items: center; }
  .swatch { width: 9px; height: 9px; background: #1e1e1e; border: 1px solid #292929; margin: 0 5px 0 4px; }
  .field span { width: 77px; letter-spacing: 0; }
  .field em { font-style: normal; border-left: 1px solid #2c2c2c; line-height: 18px; padding-left: 6px; width: 22px; letter-spacing: -.1px; }
  .field u { text-decoration: none; color: #aaa; }
  .styles { height: 149px; }
  .styles .h { height: 30px; }
  .label { height: 24px; line-height: 24px; padding-left: 12px; color: #b5b5b5; font-weight: 500; letter-spacing: -.1px; }
  .theme { height: 25px; padding-left: 15px; gap: 8px; margin-bottom: 10px; }
  .theme svg { stroke: #999; }
  .dim b { color: #b5b5b5; }
  .dim svg { stroke: #bbb; }
  .help { position: absolute; right: 16px; bottom: 18px; width: 24px; height: 24px; border-radius: 50%; background: #202020; text-align: center; font-size: 12px; line-height: 24px; font-weight: 400; letter-spacing: 0; }
</style>
